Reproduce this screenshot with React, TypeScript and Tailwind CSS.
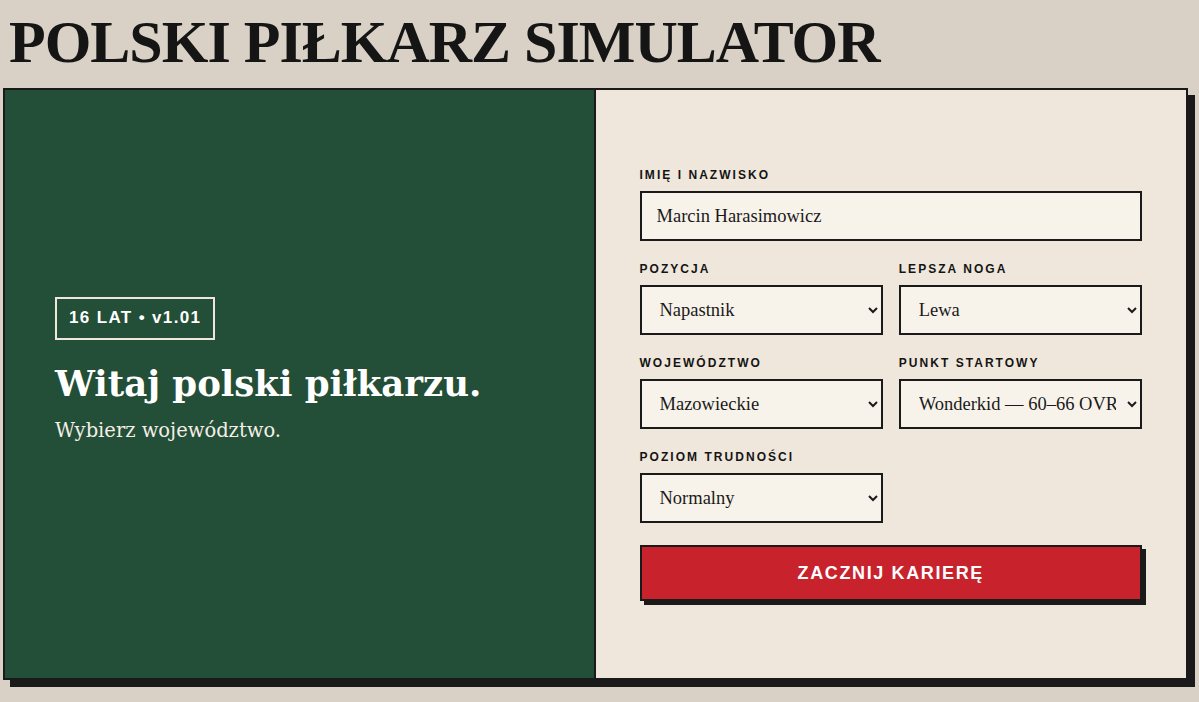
import { useState } from "react"

const labelCls =
  "block mb-2 h-4 text-[12px] leading-4 font-extrabold tracking-[0.17em] uppercase text-[#141414] font-['Liberation_Sans',Arial,sans-serif]"

const fieldCls =
  "w-full h-[50px] border-2 border-[#1a1a1a] bg-[#f8f3ea] text-[18.5px] text-[#1a1a1a] font-['Liberation_Serif',Georgia,serif] outline-none"

interface SelectFieldProps {
  label: string
  value: string
  options: string[]
  onChange: (v: string) => void
}

function SelectField({ label, value, options, onChange }: SelectFieldProps) {
  return (
    <div>
      <label className={labelCls}>{label}</label>
      <select className={`${fieldCls} pl-[14px] pr-2`} value={value} onChange={(e) => onChange(e.target.value)}>
        {options.map((o) => (
          <option key={o}>{o}</option>
        ))}
      </select>
    </div>
  )
}

export default function App() {
  const [name, setName] = useState("Marcin Harasimowicz")
  const [position, setPosition] = useState("Napastnik")
  const [foot, setFoot] = useState("Lewa")
  const [region, setRegion] = useState("Mazowieckie")
  const [start, setStart] = useState("Wonderkid — 60–66 OVR")
  const [difficulty, setDifficulty] = useState("Normalny")

  return (
    <div className="min-h-screen bg-[#d9d1c5] overflow-hidden">
      <h1 className="h-[88px] pt-[12px] pl-[9px] text-[60px] leading-none font-bold tracking-[-1px] text-[#151515] font-['Liberation_Serif',Georgia,serif]">
        POLSKI PIŁKARZ SIMULATOR
      </h1>

      <div className="ml-[3px] w-[1185px] h-[592px] grid grid-cols-2 border-2 border-[#1a1a1a] shadow-[7px_7px_0_#1a1a1a]">
        {/* left: welcome panel */}
        <div className="bg-[#234e37] border-r-2 border-[#1a1a1a] flex flex-col justify-center pl-[50px] pb-[26px]">
          <div className="self-start h-[43px] flex items-center px-[12px] border-2 border-[#efe7db] text-white text-[17px] font-bold tracking-[0.08em] font-['Liberation_Sans',Arial,sans-serif]">
            16 LAT • v1.01
          </div>
          <h2 className="mt-[23px] text-[35.5px] leading-[1.2] font-bold text-white font-['DejaVu_Serif',Georgia,serif]">
            Witaj polski piłkarzu.
          </h2>
          <p className="mt-[11px] text-[19.5px] text-[#f3efe6] font-['DejaVu_Serif',Georgia,serif]">
            Wybierz województwo.
          </p>
        </div>

        {/* right: career form */}
        <div className="bg-[#efe7db] flex flex-col justify-center px-[44px]">
          <div className="flex flex-col gap-5">
            <div>
              <label className={labelCls}>Imię i nazwisko</label>
              <input className={`${fieldCls} px-[15px]`} value={name} onChange={(e) => setName(e.target.value)} />
            </div>
            <div className="grid grid-cols-2 gap-4">
              <SelectField
                label="Pozycja"
                value={position}
                onChange={setPosition}
                options={["Bramkarz", "Obrońca", "Pomocnik", "Napastnik"]}
              />
              <SelectField label="Lepsza noga" value={foot} onChange={setFoot} options={["Lewa", "Prawa"]} />
            </div>
            <div className="grid grid-cols-2 gap-4">
              <SelectField
                label="Województwo"
                value={region}
                onChange={setRegion}
                options={["Mazowieckie", "Małopolskie", "Śląskie", "Pomorskie", "Wielkopolskie"]}
              />
              <SelectField
                label="Punkt startowy"
                value={start}
                onChange={setStart}
                options={["Amator — 45–52 OVR", "Talent — 53–59 OVR", "Wonderkid — 60–66 OVR"]}
              />
            </div>
            <div className="grid grid-cols-2 gap-4">
              <SelectField
                label="Poziom trudności"
                value={difficulty}
                onChange={setDifficulty}
                options={["Łatwy", "Normalny", "Trudny"]}
              />
            </div>
            <button className="mt-[2px] h-[56px] bg-[#c8232c] border-2 border-[#1a1a1a] shadow-[4px_4px_0_#1a1a1a] text-white text-[18px] font-extrabold tracking-[0.09em] font-['Liberation_Sans',Arial,sans-serif]">
              ZACZNIJ KARIERĘ
            </button>
          </div>
        </div>
      </div>
    </div>
  )
}
